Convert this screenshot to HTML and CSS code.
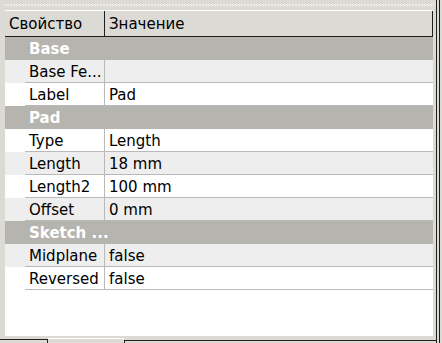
FILE: index.html
```html
<!DOCTYPE html>
<html>
<head>
<meta charset="utf-8">
<link rel="stylesheet" href="styles.css">
</head>
<body>
<div class="window">
  <div class="main">
    <div class="dots"></div>
    <div class="panel">
      <div class="header">
        <div class="hcell c1">Свойство</div>
        <div class="hcell c2">Значение</div>
      </div>
      <div class="group">Base</div>
      <div class="row alt"><div class="indent"></div><div class="name">Base Fe...</div><div class="val"></div></div>
      <div class="row"><div class="indent"></div><div class="name">Label</div><div class="val">Pad</div></div>
      <div class="group">Pad</div>
      <div class="row"><div class="indent"></div><div class="name">Type</div><div class="val">Length</div></div>
      <div class="row alt"><div class="indent"></div><div class="name">Length</div><div class="val">18 mm</div></div>
      <div class="row"><div class="indent"></div><div class="name">Length2</div><div class="val">100 mm</div></div>
      <div class="row alt"><div class="indent"></div><div class="name">Offset</div><div class="val">0 mm</div></div>
      <div class="group">Sketch ...</div>
      <div class="row alt"><div class="indent"></div><div class="name">Midplane</div><div class="val">false</div></div>
      <div class="row"><div class="indent"></div><div class="name">Reversed</div><div class="val">false</div></div>
    </div>
    <div class="tabs">
      <div class="tab t1"></div>
      <div class="tab t2"></div>
      <div class="tab t3"></div>
    </div>
  </div>
  <div class="sep"></div>
</div>
</body>
</html>
```
FILE: styles.css
```css
html, body {
  margin: 0;
  padding: 0;
  background: #dcdad5;
  font-family: "DejaVu Sans", sans-serif;
  font-size: 15px;
  color: #000;
}
.window {
  display: flex;
  width: 442px;
  height: 343px;
  overflow: hidden;
}
.main {
  width: 436px;
  display: flex;
  flex-direction: column;
}
.dots {
  margin: 4px 0 0 4px;
  width: 430px;
  height: 2px;
  background-image:
    repeating-linear-gradient(90deg, #ffffff 0 1px, transparent 1px 3px),
    repeating-linear-gradient(90deg, transparent 0 1px, #ffffff 1px 2px, transparent 2px 3px);
  background-size: 100% 1px, 100% 1px;
  background-position: 0 0, 0 1px;
  background-repeat: no-repeat;
}
.panel {
  margin: 4px 0 0 5px;
  width: 428px;
  height: 327px;
  background: #ffffff;
  border-top: 1px solid #ffffff;
  box-sizing: border-box;
}
.header {
  display: flex;
  height: 26px;
  background: #dcdad5;
  border-bottom: 1px solid #1f1f1f;
  border-right: 1px solid #1f1f1f;
  box-sizing: border-box;
}
.hcell {
  display: flex;
  align-items: center;
  padding-left: 4px;
  box-sizing: border-box;
}
.c1 {
  width: 100px;
  border-right: 1px solid #1f1f1f;
}
.c2 {
  flex: 1;
}
.group {
  height: 23px;
  background: #b6b4af;
  color: #ffffff;
  font-weight: bold;
  display: flex;
  align-items: center;
  padding-left: 24px;
}
.row {
  height: 23px;
  display: flex;
  background: #ffffff;
}
.row.alt {
  background: #eeeeee;
}
.indent {
  width: 20px;
}
.name, .val {
  display: flex;
  align-items: center;
  border-bottom: 1px solid #b9b9b9;
  box-sizing: border-box;
  padding-top: 1px;
  white-space: nowrap;
}
.name {
  width: 80px;
  padding-left: 4px;
  border-right: 1px solid #b9b9b9;
}
.val {
  flex: 1;
  padding-left: 4px;
}
.tabs {
  display: flex;
  margin-top: 2px;
  height: 5px;
}
.tab {
  box-sizing: border-box;
}
.t1 {
  width: 48px;
  margin-top: 1px;
  border-top: 1px solid #1f1f1f;
  border-right: 1px solid #1f1f1f;
}
.t2 {
  width: 76px;
  border-top: 1px solid #ffffff;
}
.t3 {
  flex: 1;
  margin-top: 2px;
  border-top: 1px solid #1f1f1f;
  border-left: 1px solid #1f1f1f;
}
.sep {
  width: 6px;
  box-sizing: border-box;
  border-left: 1px solid #1f1f1f;
  position: relative;
}
.sep::after {
  content: "";
  display: block;
  margin-left: 2px;
  width: 1px;
  height: 100%;
  background: #1f1f1f;
}
```
